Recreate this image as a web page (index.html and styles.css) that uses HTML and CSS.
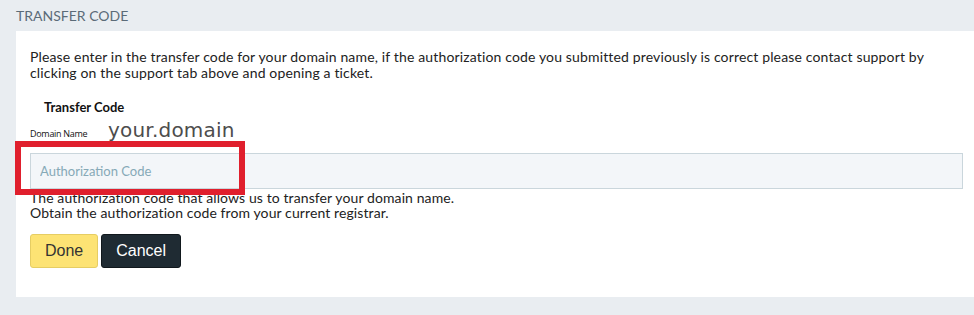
FILE: index.html
```html
<!DOCTYPE html>
<html lang="en">
<head>
    <meta charset="UTF-8">
    <title>Transfer Code</title>
    <link rel="stylesheet" href="styles.css">
</head>
<body>
    <div class="title">TRANSFER CODE</div>
    <div class="panel">
        <p class="intro">Please enter in the transfer code for your domain name, if the authorization code you submitted previously is correct please contact support by clicking on the support tab above and opening a ticket.</p>
        <div class="label">Transfer Code</div>
        <div class="domain">
            <span class="domain-label">Domain Name</span>
            <span class="domain-value">your.domain</span>
        </div>
        <input class="code" type="text" placeholder="Authorization Code">
        <div class="help">
            The authorization code that allows us to transfer your domain name.<br>
            Obtain the authorization code from your current registrar.
        </div>
        <div class="actions">
            <button class="btn btn-done">Done</button>
            <button class="btn btn-cancel">Cancel</button>
        </div>
        <div class="highlight"></div>
    </div>
</body>
</html>
```

FILE: styles.css
```css
body {
    margin: 0;
    background-color: #e9edf1;
    font-family: Lato, "Open Sans", Arial, sans-serif;
    color: #222;
}
.title {
    height: 31px;
    line-height: 32px;
    padding-left: 16px;
    font-size: 14px;
    color: #5b6b78;
}
.panel {
    position: relative;
    margin-left: 16px;
    height: 266px;
    box-sizing: border-box;
    padding: 18px 11px 0 14px;
    background-color: #fff;
}
.intro {
    margin: 0;
    font-size: 14px;
    line-height: 16px;
    letter-spacing: 0.15px;
}
.label {
    margin: 18px 0 0 14px;
    font-size: 13px;
    font-weight: bold;
    line-height: 16px;
    color: #111;
}
.domain {
    display: flex;
    align-items: baseline;
    height: 38px;
    padding-top: 3px;
    box-sizing: border-box;
}
.domain-label {
    font-family: "Open Sans", Arial, sans-serif;
    font-size: 9px;
    letter-spacing: -0.3px;
    color: #111;
    width: 78px;
}
.domain-value {
    font-family: "DejaVu Sans", Verdana, sans-serif;
    font-size: 20px;
    color: #4d4d4d;
    letter-spacing: 0.2px;
}
.code {
    display: block;
    width: 100%;
    height: 36px;
    box-sizing: border-box;
    margin: 0;
    padding: 0 9px;
    border: 1px solid #cad6dc;
    background-color: #f3f6f9;
    font-family: Lato, sans-serif;
    font-size: 13px;
    color: #333;
}
.code::placeholder {
    color: #86a9b7;
}
.help {
    font-size: 14px;
    line-height: 15px;
    margin-top: 1px;
    letter-spacing: 0.1px;
}
.actions {
    display: flex;
    gap: 3px;
    margin-top: 14px;
}
.btn {
    height: 34px;
    padding: 0 14px;
    border-radius: 3px;
    font-family: "Liberation Sans", Arial, sans-serif;
    font-size: 16px;
}
.btn-done {
    background-color: #fde374;
    border: 1px solid #e6cd63;
    color: #333;
}
.btn-cancel {
    background-color: #1f2b33;
    border: 1px solid #11181d;
    color: #fff;
}
.highlight {
    position: absolute;
    left: -1px;
    top: 110px;
    width: 230px;
    height: 54px;
    box-sizing: border-box;
    border: 6px solid #e01f2d;
}
```
